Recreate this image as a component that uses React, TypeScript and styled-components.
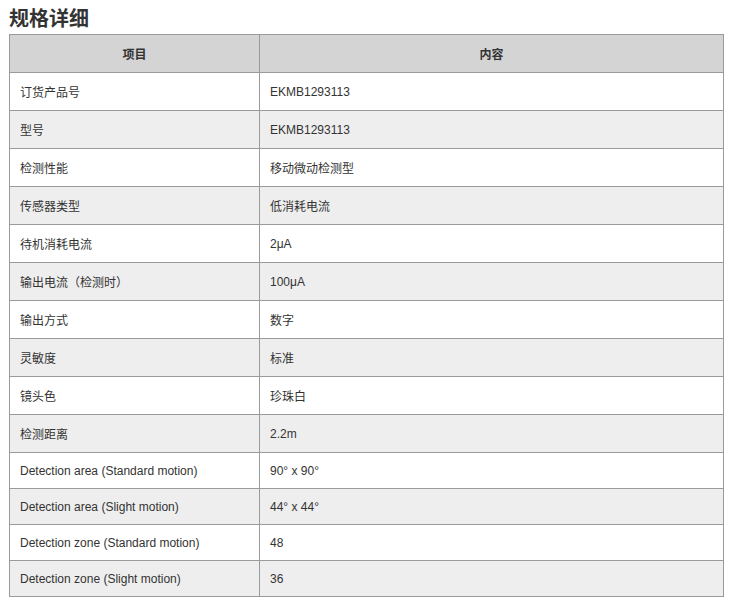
import React from "react";
import styled, { createGlobalStyle } from "styled-components";

const Global = createGlobalStyle`
  html, body { margin: 0; padding: 0; background: #fff; }
  body { font-family: "Liberation Sans", Arial, "Noto Sans CJK SC", sans-serif; color: #333; }
`;

const Page = styled.div`
  padding: 4px 11px 0 9px;
`;

const Title = styled.h2`
  margin: 0;
  font-size: 20px;
  line-height: 30px;
  font-weight: bold;
  color: #333;
  font-family: "Liberation Sans", "Noto Sans CJK SC", sans-serif;
`;

const Table = styled.table`
  width: 715px;
  border-collapse: collapse;
  font-size: 12px;
  color: #333;
`;

const HeadCell = styled.th`
  background: #d4d4d4;
  border: 1px solid #9a9a9a;
  height: 37px;
  padding: 0;
  font-weight: bold;
  text-align: center;
  font-family: "Liberation Sans", "Noto Sans CJK SC", sans-serif;
`;

const Row = styled.tr<{ $alt: boolean; $h: number }>`
  background: ${(p) => (p.$alt ? "#eeeeee" : "#ffffff")};
  height: ${(p) => p.$h}px;
`;

const Cell = styled.td`
  border: 1px solid #9a9a9a;
  padding: 0 10px;
  text-align: left;
  vertical-align: middle;
  font-family: "Liberation Sans", Arial, "Noto Sans CJK SC", sans-serif;
`;

const rows: [string, string][] = [
  ["订货产品号", "EKMB1293113"],
  ["型号", "EKMB1293113"],
  ["检测性能", "移动微动检测型"],
  ["传感器类型", "低消耗电流"],
  ["待机消耗电流", "2μA"],
  ["输出电流（检测时）", "100μA"],
  ["输出方式", "数字"],
  ["灵敏度", "标准"],
  ["镜头色", "珍珠白"],
  ["检测距离", "2.2m"],
  ["Detection area (Standard motion)", "90° x 90°"],
  ["Detection area (Slight motion)", "44° x 44°"],
  ["Detection zone (Standard motion)", "48"],
  ["Detection zone (Slight motion)", "36"],
];

export default function App() {
  return (
    <>
      <Global />
      <Page>
        <Title>规格详细</Title>
        <Table>
          <colgroup>
            <col style={{ width: 250 }} />
            <col />
          </colgroup>
          <thead>
            <tr>
              <HeadCell>项目</HeadCell>
              <HeadCell>内容</HeadCell>
            </tr>
          </thead>
          <tbody>
            {rows.map(([k, v], i) => (
              <Row key={i} $alt={i % 2 === 1} $h={i < 10 ? 38 : 36}>
                <Cell>{k}</Cell>
                <Cell>{v}</Cell>
              </Row>
            ))}
          </tbody>
        </Table>
      </Page>
    </>
  );
}
